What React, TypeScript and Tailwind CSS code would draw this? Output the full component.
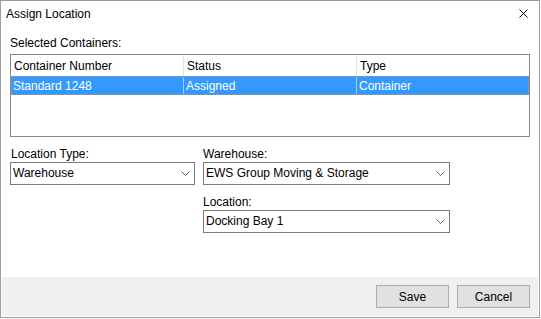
import React from "react";

function Chevron() {
  return (
    <svg width="9" height="5" viewBox="0 0 9 5" className="shrink-0">
      <polyline points="0.5,0.5 4.5,4.5 8.5,0.5" fill="none" stroke="#606060" strokeWidth="1" />
    </svg>
  );
}

function Select({ value, width }: { value: string; width: string }) {
  return (
    <div className={`${width} h-[23px] border border-[#7a7a7a] bg-white flex items-center justify-between pl-[2px] pr-[4px]`}>
      <span className="leading-[14px] mb-[2px]">{value}</span>
      <Chevron />
    </div>
  );
}

export default function App() {
  return (
    <div className="w-[541px] h-[319px] bg-white">
      <div className="w-[540px] h-[318px] border border-[#9d9d9d] bg-white flex flex-col font-['Liberation_Sans',Arial,sans-serif] text-[12px] leading-[14px] text-black">
        <div className="h-[20px] flex items-start justify-between pl-[5px] pt-[6px]">
          <span>Assign Location</span>
          <svg width="9" height="9" viewBox="0 0 9 9" className="mr-[11px] mt-[2px]">
            <line x1="0.5" y1="0.5" x2="8.5" y2="8.5" stroke="#000" strokeWidth="1" />
            <line x1="8.5" y1="0.5" x2="0.5" y2="8.5" stroke="#000" strokeWidth="1" />
          </svg>
        </div>
        <div className="flex-1 px-[9px]">
          <div className="mt-[15px]">Selected Containers:</div>
          <div className="mt-[4px] h-[83px] border border-[#828790] bg-white flex flex-col">
            <div className="h-[21px] flex">
              <div className="w-[173px] border-r border-[#e5e5e5] pl-[3px] pt-[4px]">Container Number</div>
              <div className="w-[173px] border-r border-[#e5e5e5] pl-[3px] pt-[4px]">Status</div>
              <div className="flex-1 pl-[3px] pt-[4px]">Type</div>
            </div>
            <div className="h-[19px] flex bg-[#3399ff] text-white border border-dotted border-[#b8966e]">
              <div className="w-[172px] border-r border-[#9ecbf7] pl-[1px] pt-[2px]">Standard 1248</div>
              <div className="w-[173px] border-r border-[#9ecbf7] pl-[2px] pt-[2px]">Assigned</div>
              <div className="flex-1 pl-[2px] pt-[2px]">Container</div>
            </div>
          </div>
          <div className="flex gap-[8px]">
            <div className="flex flex-col">
              <div className="mt-[10px] pl-[1px]">Location Type:</div>
              <div className="mt-[1px]">
                <Select value="Warehouse" width="w-[185px]" />
              </div>
            </div>
            <div className="flex flex-col">
              <div className="mt-[10px]">Warehouse:</div>
              <div className="mt-[1px]">
                <Select value="EWS Group Moving & Storage" width="w-[247px]" />
              </div>
              <div className="mt-[10px]">Location:</div>
              <div className="mt-[1px]">
                <Select value="Docking Bay 1" width="w-[247px]" />
              </div>
            </div>
          </div>
        </div>
        <div className="h-[39px] mx-[1px] mb-[1px] bg-[#f0f0f0] flex justify-end items-start gap-[8px] pt-[8px] pr-[8px]">
          <button className="w-[73px] h-[23px] bg-[#e1e1e1] border border-[#adadad] text-black text-[12px] leading-[14px]">Save</button>
          <button className="w-[73px] h-[23px] bg-[#e1e1e1] border border-[#adadad] text-black text-[12px] leading-[14px]">Cancel</button>
        </div>
      </div>
    </div>
  );
}
